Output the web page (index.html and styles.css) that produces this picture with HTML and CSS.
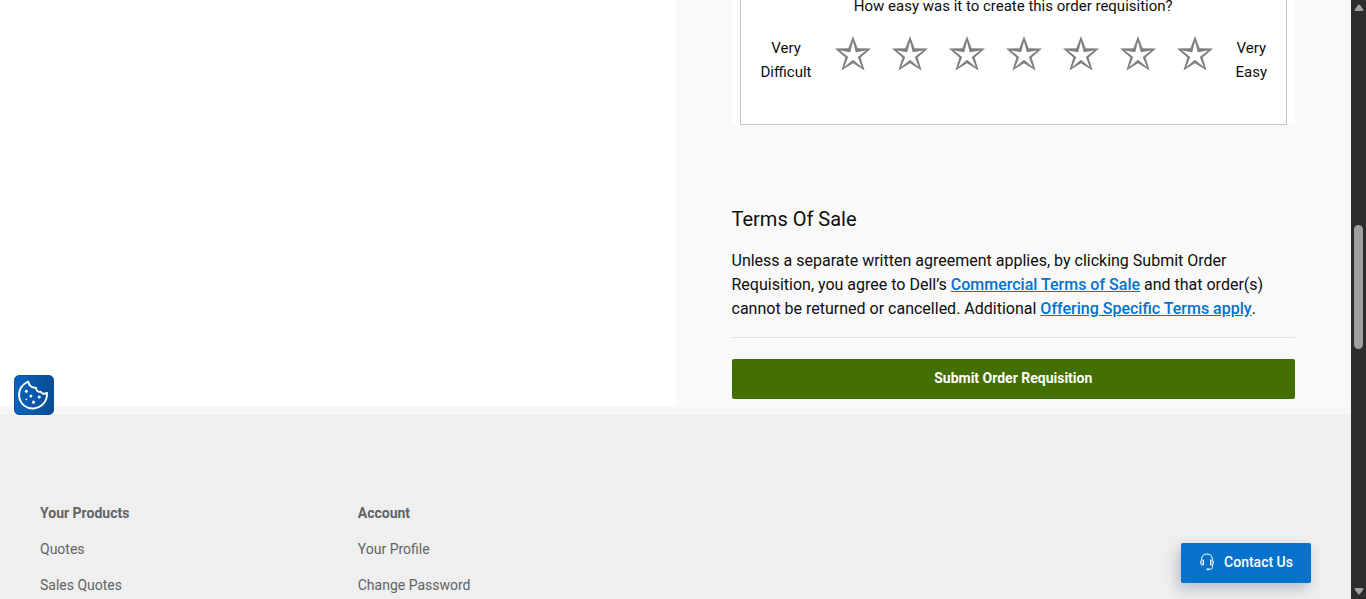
FILE: index.html
```html
<!DOCTYPE html>
<html lang="en">
<head>
<meta charset="utf-8">
<meta name="viewport" content="width=device-width, initial-scale=1">
<title>Order Requisition</title>
<link rel="stylesheet" href="styles.css">
</head>
<body>
<svg class="sprite" aria-hidden="true">
  <symbol id="star" viewBox="0 0 36 36">
    <path fill-rule="evenodd" d="M18 0L22.600 12.300L36 12.600L25.600 21.400L29.600 34.500L18 27.300L6.400 34.500L10.400 21.400L0 12.600L13.400 12.300ZM18 5.500L15.200 16.200L5 14.500L13.200 21L9.300 31L18 23.800L26.700 31L22.800 21L31 14.500L20.800 16.200Z"/>
  </symbol>
</svg>
<div class="window">
  <div class="page">
    <main class="checkout">
      <section class="summary">
        <div class="survey">
          <div class="survey-card" role="radiogroup" aria-labelledby="survey-question">
            <div class="survey-question" id="survey-question">How easy was it to create this order requisition?</div>
            <div class="rating">
              <span class="rating-label">Very<br>Difficult</span>
              <div class="stars">
                <label class="star"><input type="radio" name="ease" value="1" aria-label="1 star"><svg><use href="#star"/></svg></label>
                <label class="star"><input type="radio" name="ease" value="2" aria-label="2 stars"><svg><use href="#star"/></svg></label>
                <label class="star"><input type="radio" name="ease" value="3" aria-label="3 stars"><svg><use href="#star"/></svg></label>
                <label class="star"><input type="radio" name="ease" value="4" aria-label="4 stars"><svg><use href="#star"/></svg></label>
                <label class="star"><input type="radio" name="ease" value="5" aria-label="5 stars"><svg><use href="#star"/></svg></label>
                <label class="star"><input type="radio" name="ease" value="6" aria-label="6 stars"><svg><use href="#star"/></svg></label>
                <label class="star"><input type="radio" name="ease" value="7" aria-label="7 stars"><svg><use href="#star"/></svg></label>
              </div>
              <span class="rating-label">Very<br>Easy</span>
            </div>
          </div>
        </div>
        <h2 class="terms-title">Terms Of Sale</h2>
        <p class="terms-text">Unless a separate written agreement applies, by clicking Submit Order Requisition, you agree to Dell’s <a href="#">Commercial Terms of Sale</a> and that order(s) cannot be returned or cancelled. Additional <a href="#">Offering Specific Terms apply</a>.</p>
        <hr class="divider">
        <button class="submit" type="button">Submit Order Requisition</button>
      </section>
    </main>
    <footer class="footer">
      <nav class="footer-column" aria-label="Your Products">
        <h3>Your Products</h3>
        <a href="#">Quotes</a>
        <a href="#">Sales Quotes</a>
      </nav>
      <nav class="footer-column" aria-label="Account">
        <h3>Account</h3>
        <a href="#">Your Profile</a>
        <a href="#">Change Password</a>
      </nav>
    </footer>
    <button class="cookies" type="button" aria-label="Cookie settings">
      <svg viewBox="0 0 40 40" fill="none" stroke="#fff" stroke-width="2" stroke-linejoin="round" stroke-linecap="round">
        <path d="M14 6C7.500 8.500 3.400 14.600 4.400 22C5.600 29.600 12 34.800 19.600 34.200C28 33.500 34 27 33.700 17.800C31 19.400 28.200 19 27 16.500C24.400 17.200 22.100 15.600 22 12.200C18.400 13 14.600 10.400 14 6Z"/>
        <g fill="#fff" stroke="none"><circle cx="12" cy="16" r="1.600"/><circle cx="16.700" cy="21" r="1.600"/><circle cx="25.500" cy="22" r="1.600"/><circle cx="12" cy="24.500" r="0.900"/><circle cx="19.500" cy="27.500" r="1.600"/></g>
      </svg>
    </button>
    <button class="contact" type="button">
      <svg viewBox="0 0 16 18" fill="none" stroke="#fff" stroke-width="1">
        <path d="M2.500 7V6.500C2.500 3 4.800 1 8 1S13.500 3 13.500 6.500V7M13.500 12V13.500C13.500 15.500 12.500 16.300 10.500 16.300"/>
        <path d="M4.500 7H3.500C2 7 1.500 8 1.500 9.500S2 12 3.500 12H4.500ZM11.500 7H12.500C14 7 14.500 8 14.500 9.500S14 12 12.500 12H11.500Z" fill="#fff" fill-opacity="0.400"/>
        <path d="M7.500 16.300H10.500" stroke-width="1.600"/>
      </svg>
      Contact Us
    </button>
  </div>
  <div class="scrollbar" aria-hidden="true">
    <svg viewBox="0 0 10 8"><path d="M4 1Q5 0 6 1L9 5Q10 7 8 7H2Q0 7 1 5Z"/></svg>
    <div class="scroll-track"><div class="scroll-thumb"></div></div>
    <svg viewBox="0 0 10 8"><path d="M4 7Q5 8 6 7L9 3Q10 1 8 1H2Q0 1 1 3Z"/></svg>
  </div>
</div>
</body>
</html>
```

FILE: styles.css
```css
* {
  box-sizing: border-box;
}

body {
  margin: 0;
  color: #0e0e0e;
  font-family: Roboto, "Liberation Sans", sans-serif;
  font-size: 16px;
  line-height: 24px;
}

button {
  border: 0;
  padding: 0 0 2px;
  color: #fff;
  font: inherit;
  font-size: 14px;
  cursor: pointer;
}

.sprite {
  display: none;
}

.window {
  display: grid;
  grid-template-columns: 1fr 15px;
  height: 100vh;
}

.page {
  position: relative;
  display: flex;
  flex-direction: column;
  overflow: hidden;
}

.checkout {
  display: grid;
  grid-template-columns: 1fr 1fr;
  border-bottom: 8px solid #f5f6f7;
}

.summary {
  grid-column: 2;
  padding: 0 56px 8px;
  background: #f9f9f9;
}

.survey {
  padding: 0 8px;
  background: #fff;
}

.survey-card {
  padding: 0 19px 40px;
  border: 1px solid #c4c4c4;
  border-top: 0;
  font-size: 15px;
}

.survey-question {
  line-height: 12px;
  text-align: center;
}

.rating {
  display: flex;
  justify-content: space-between;
  margin-top: 24px;
  text-align: center;
}

.rating-label:first-child {
  min-width: 53px;
}

.stars {
  display: flex;
  gap: 21px;
}

.star {
  position: relative;
  width: 36px;
  height: 36px;
  cursor: pointer;
}

.star input {
  position: absolute;
  inset: 0;
  width: 100%;
  height: 100%;
  margin: 0;
  opacity: 0;
}

.star svg {
  display: block;
  width: 36px;
  height: 36px;
  fill: #808080;
}

.terms-title {
  margin: 82px 0 18px;
  font-size: 20px;
  font-weight: 400;
}

.terms-text {
  margin: 0 0 16px;
}

.terms-text a {
  color: #0672cb;
  font-weight: 500;
}

.divider {
  margin: 0 0 21px;
  border: 0;
  border-top: 1px solid #e1e1e1;
}

.submit {
  display: block;
  width: 100%;
  height: 40px;
  border-radius: 2px;
  background: #436f00;
  font-weight: 700;
}

.footer {
  display: grid;
  flex: 1;
  grid-template-columns: repeat(4, 1fr);
  padding: 88px 40px 0;
  background: #efefef;
  color: #636363;
  font-size: 14px;
  line-height: 20px;
}

.footer-column {
  display: flex;
  flex-direction: column;
  align-items: flex-start;
  gap: 16px;
}

.footer h3 {
  margin: 0;
  font-size: 14px;
}

.footer a {
  color: inherit;
  text-decoration: none;
}

.cookies {
  position: absolute;
  bottom: 184px;
  left: 14px;
  width: 40px;
  height: 40px;
  padding: 0;
  border: 1px solid #10509a;
  border-radius: 5px;
  background: linear-gradient(90deg, #0b63bd, #084c94);
}

.cookies svg {
  display: block;
  width: 38px;
  height: 38px;
}

.contact {
  position: absolute;
  right: 40px;
  bottom: 16px;
  display: flex;
  align-items: center;
  justify-content: center;
  gap: 9px;
  width: 130px;
  height: 40px;
  padding-bottom: 3px;
  border-radius: 2px;
  background: #0672cb;
  box-shadow: -3px 6px 14px rgba(0, 43, 85, 0.25);
  font-weight: 500;
}

.contact svg {
  width: 16px;
  height: 18px;
}

.scrollbar {
  display: flex;
  flex-direction: column;
  align-items: center;
  padding: 4px 0;
  background: #2c2c2c;
}

.scrollbar svg {
  width: 10px;
  height: 8px;
  fill: #9f9f9f;
}

.scroll-track {
  display: grid;
  flex: 1;
  grid-template-rows: 213fr 124fr 238fr;
}

.scroll-thumb {
  grid-row: 2;
  width: 9px;
  border-radius: 5px;
  background: #9f9f9f;
}
```
